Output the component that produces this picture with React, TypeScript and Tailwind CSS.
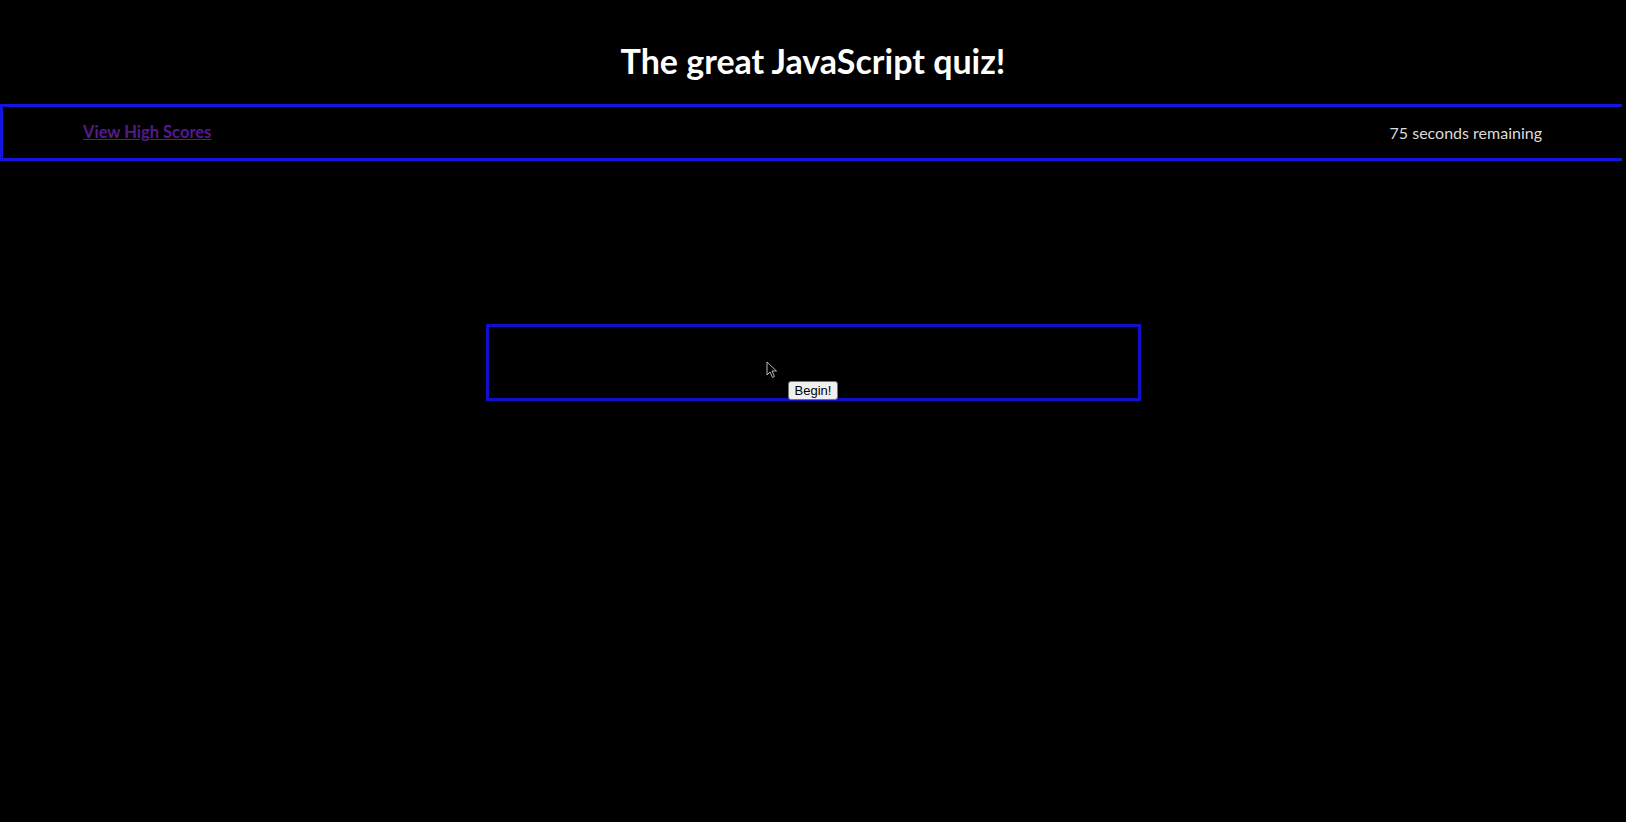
export default function App() {
  return (
    <div className="min-h-[822px] w-full bg-black text-white overflow-hidden" style={{ fontFamily: 'Lato, "Noto Sans", sans-serif' }}>
      <header className="pt-[39px] h-[104px]">
        <h1 className="text-center text-[34px] font-bold leading-[44px] text-white">The great JavaScript quiz!</h1>
      </header>
      <nav className="w-[1622px] h-[57px] border-[3px] border-r-0 border-[#1414e0] flex items-center justify-between pl-[80px] pr-[80px]">
        <a href="#" className="text-[16.5px] font-bold text-[#551a8b] underline">View High Scores</a>
        <span className="text-[16px] text-[#dcdcdc]">75 seconds remaining</span>
      </nav>
      <main className="flex justify-center pt-[163px]">
        <div className="relative w-[655px] h-[77px] border-[3px] border-[#1010cc] flex flex-col items-center justify-end">
          <button className="h-[19px] px-[6px] bg-[#f0f0f0] border border-[#767676] rounded-[3px] text-[13px] leading-none text-black -mb-[2px]" style={{ fontFamily: '"Liberation Sans", Arial, sans-serif' }}>
            Begin!
          </button>
          <svg className="absolute left-[277px] top-[34px]" width="12" height="18" viewBox="0 0 12 18">
            <path d="M1 1 L1 14 L4 11 L6.5 16.5 L8.5 15.5 L6 10 L10.5 10 Z" fill="black" stroke="#bbbbbb" strokeWidth="1" />
          </svg>
        </div>
      </main>
    </div>
  )
}
